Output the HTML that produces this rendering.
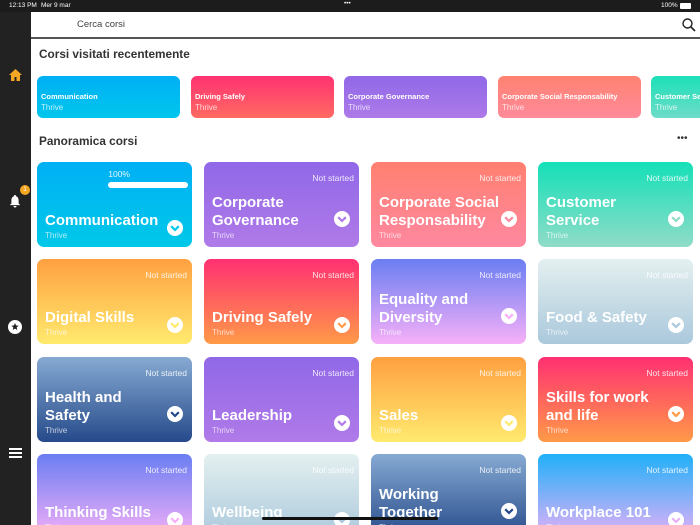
<!DOCTYPE html><html><head><meta charset="utf-8"><style>
*{margin:0;padding:0;box-sizing:border-box}
html,body{width:700px;height:525px;overflow:hidden}
body{background:#fff;font-family:"Liberation Sans",sans-serif;position:relative}
.sb{position:absolute;left:0;top:12px;width:31px;height:513px;background:#222}
.st{position:absolute;left:0;top:0;width:700px;height:12px;background:#1c1c1c;color:#fff;font-size:6.5px;z-index:2}
.search{position:absolute;left:31px;top:12px;width:669px;height:27px;border-bottom:2px solid #555;background:#fff}
.h{position:absolute;font-size:11.8px;font-weight:bold;color:#333}
.rc{position:absolute;top:76px;width:143px;height:42px;border-radius:6px;color:#fff;padding:16px 0 0 4px}
.rc b{font-size:7.5px;display:block}.rc i{font-style:normal;font-size:8px;opacity:.75;display:block;margin-top:2px}
.c{position:absolute;width:155px;height:85px;border-radius:7px;color:#fff;overflow:hidden}
.ns{position:absolute;right:5px;top:11px;font-size:8.5px;opacity:.85}
.t{position:absolute;left:8px;font-size:15px;font-weight:bold;line-height:17.5px}
.th{position:absolute;left:8px;top:69px;font-size:8px;opacity:.7}
.ch{position:absolute;right:9px;width:16px;height:16px;border-radius:50%;background:#fff}
.ch svg{position:absolute;left:3px;top:4.5px}
</style></head><body>
<div class="st"><span style="position:absolute;left:9px;top:2px">12:13 PM</span><span style="position:absolute;left:41px;top:2px">Mer 9 mar</span><span style="position:absolute;left:344px;top:0px">•••</span><span style="position:absolute;left:661px;top:2px">100%</span><span style="position:absolute;left:680px;top:3px;width:11px;height:6px;background:#fff;border-radius:1px"></span></div>
<div class="sb">
<svg style="position:absolute;left:9px;top:57px" width="13" height="12" viewBox="0 0 13 12"><path d="M6.5 0L0 6h2v6h3.5V8h2v4H11V6h2z" fill="#f5a623"/></svg>
<svg style="position:absolute;left:9px;top:183px" width="12" height="13" viewBox="0 0 12 13"><path d="M6 0a1 1 0 0 1 1 1.2C9 1.8 9.6 3.5 9.6 5.5v3l1.6 1.6H.8l1.6-1.6v-3c0-2 .6-3.7 2.6-4.3A1 1 0 0 1 6 0zM4.5 11h3a1.5 1.5 0 0 1-3 0z" fill="#fff"/></svg>
<div style="position:absolute;left:20px;top:173px;width:10px;height:10px;border-radius:50%;background:#f5a623;color:#fff;font-size:6px;text-align:center;line-height:10px">1</div>
<svg style="position:absolute;left:8px;top:308px" width="14" height="14" viewBox="0 0 14 14"><circle cx="7" cy="7" r="7" fill="#fff"/><path d="M7 3l1.1 2.5 2.6.2-2 1.7.6 2.6L7 8.6 4.7 10l.6-2.6-2-1.7 2.6-.2z" fill="#222"/></svg>
<div style="position:absolute;left:9px;top:436px;width:13px;height:2px;background:#fff;box-shadow:0 4px 0 #fff,0 8px 0 #fff"></div>
</div>
<div class="search"><span style="position:absolute;left:46px;top:7px;font-size:9.5px;color:#444">Cerca corsi</span>
<svg style="position:absolute;left:651px;top:6px" width="14" height="14" viewBox="0 0 14 14"><circle cx="5.5" cy="5.5" r="4.5" fill="none" stroke="#222" stroke-width="1.4"/><path d="M9 9l4 4" stroke="#222" stroke-width="1.6"/></svg></div>
<div class="h" style="left:39px;top:47px">Corsi visitati recentemente</div>
<div class="rc" style="left:37px;background:linear-gradient(#00b0f5,#00c6ec)"><b>Communication</b><i>Thrive</i></div>
<div class="rc" style="left:191px;background:linear-gradient(#ff3272,#ff6a62)"><b>Driving Safely</b><i>Thrive</i></div>
<div class="rc" style="left:344px;background:linear-gradient(#9068e8,#ad7ae8)"><b>Corporate Governance</b><i>Thrive</i></div>
<div class="rc" style="left:498px;background:linear-gradient(#ff8270,#ff8a9a)"><b>Corporate Social Responsability</b><i>Thrive</i></div>
<div class="rc" style="left:651px;width:60px;background:linear-gradient(#1ce0b8,#6edcc8);white-space:nowrap"><b>Customer Se</b><i>Thrive</i></div>
<div class="h" style="left:39px;top:134px">Panoramica corsi</div>
<div style="position:absolute;left:677px;top:133px;font-size:10px;color:#333">•••</div>
<div id="g"></div>
<div style="position:absolute;left:262px;top:517px;width:176px;height:3px;border-radius:2px;background:#111"></div>
<script>
var d=[
["Communication",1,"#00b0f5,#00c8e8",0],
["Corporate<br>Governance",2,"#9068e8,#b07ae8"],
["Corporate Social<br>Responsability",2,"#ff8070,#ff88a0"],
["Customer<br>Service",2,"#14e0b8,#90dcc8"],
["Digital Skills",1,"#ffa040,#ffea6e"],
["Driving Safely",1,"#ff3072,#ff9a48"],
["Equality and<br>Diversity",2,"#6a7ef2,#f6b0f8"],
["Food &amp; Safety",1,"#e4f0f0,#aac8dc"],
["Health and<br>Safety",2,"#86aad2,#264a8a"],
["Leadership",1,"#9068e8,#b07ae8"],
["Sales",1,"#ffa040,#ffea6e"],
["Skills for work<br>and life",2,"#ff3072,#ff9a48"],
["Thinking Skills",1,"#6a7ef2,#f6b0f8"],
["Wellbeing",1,"#e4f0f0,#aac8dc"],
["Working<br>Together",2,"#86aad2,#264a8a"],
["Workplace 101",1,"#20b0f8,#e8b0f8"]];
var xs=[37,204,371,538],ys=[162,259,357,454],h="";
d.forEach(function(c,i){var x=xs[i%4],y=ys[Math.floor(i/4)];
h+='<div class="c" style="left:'+x+'px;top:'+y+'px;background:linear-gradient('+c[2]+')">';
if(i==0)h+='<div style="position:absolute;right:62px;top:7px;font-size:8.5px;opacity:.9">100%</div><div style="position:absolute;left:71px;top:20px;width:80px;height:6px;border-radius:3px;background:#fff"></div>';
else h+='<div class="ns">Not started</div>';
h+='<div class="t" style="top:'+(c[1]==1?50:32)+'px">'+c[0]+'</div><div class="th">Thrive</div>';
h+='<div class="ch" style="top:'+(c[1]==1?58:49)+'px"><svg width="10" height="7" viewBox="0 0 10 7"><path d="M1.2 1.2l3.8 3.8 3.8-3.8" fill="none" stroke="'+c[2].split(",")[1]+'" stroke-width="2.2"/></svg></div></div>';});
document.getElementById("g").innerHTML=h;
</script>
</body></html>
